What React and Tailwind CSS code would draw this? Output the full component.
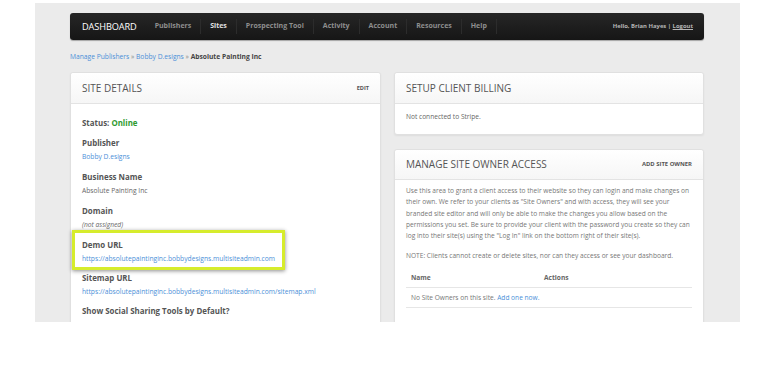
import React from "react";

const font = { fontFamily: '"Open Sans", "Noto Sans", sans-serif' };

function NavItem({ children, active }) {
  return (
    <div className="flex items-center h-full">
      <span className={`px-[9px] text-[7px] font-bold ${active ? "text-[#e0e0e0]" : "text-[#8e8e8e]"}`}>{children}</span>
      <span className="w-px h-[15px] bg-[#2c2c2c]" />
    </div>
  );
}

function Field({ label, value, cls = "text-[#4a8fd8]" }) {
  return (
    <div className="mb-[6px]">
      <div className="h-[14px] leading-[14px] text-[7.9px] font-bold text-[#555]">{label}</div>
      <div className={`h-[14px] leading-[14px] text-[6.7px] ${cls}`}>{value}</div>
    </div>
  );
}

export default function App() {
  return (
    <div className="w-[776px] h-[367px] bg-white overflow-hidden" style={font}>
      <div className="ml-[35px] mt-[3px] w-[705px] h-[319px] bg-[#ebebeb] overflow-hidden pl-[35px] pr-[36px] pt-[10px]">
        {/* Nav */}
        <div className="h-[27px] rounded-[3px] bg-gradient-to-b from-[#262626] to-[#161616] flex items-center shadow-[0_1px_1px_rgba(0,0,0,0.3)]">
          <span className="pl-[12px] pr-[9px] text-[9.2px] text-white tracking-[-0.1px]">DASHBOARD</span>
          <div className="flex items-center h-full">
            <NavItem>Publishers</NavItem>
            <NavItem active>Sites</NavItem>
            <NavItem>Prospecting Tool</NavItem>
            <NavItem>Activity</NavItem>
            <NavItem>Account</NavItem>
            <NavItem>Resources</NavItem>
            <NavItem>Help</NavItem>
          </div>
          <div className="ml-auto pr-[11px] text-[5.9px] font-bold text-[#b5b5b5]">
            Hello, Brian Hayes | <span className="underline">Logout</span>
          </div>
        </div>

        {/* Breadcrumb */}
        <div className="mt-[12px] h-[10px] leading-[10px] text-[6.7px] text-[#4a8fd8]">
          Manage Publishers <span className="text-[#888]">»</span> Bobby D.esigns <span className="text-[#888]">»</span>{" "}
          <span className="font-bold text-[#444]">Absolute Painting Inc</span>
        </div>

        <div className="mt-[10px] flex gap-[13px]">
          {/* Left card */}
          <div className="w-[311px] h-[300px] bg-white border border-[#e0e0e0] rounded-[3px] relative shadow-[0_1px_2px_rgba(0,0,0,0.06)]">
            <div className="h-[31px] flex flex-col">
              <div className="flex-1 flex items-center justify-between px-[11px] border-b border-[#e3e3e3] bg-gradient-to-b from-white to-[#f6f6f6] rounded-t-[3px]">
                <span className="text-[10px] text-[#555]">SITE DETAILS</span>
                <span className="text-[5.6px] font-bold text-[#555]">EDIT</span>
              </div>
            </div>
            <div className="px-[11px] pt-[12px]">
              <div className="mb-[6px] h-[14px] leading-[14px] text-[7.9px] font-bold text-[#555]">
                Status: <span className="text-[#2f9a2f]">Online</span>
              </div>
              <Field label="Publisher" value="Bobby D.esigns" />
              <Field label="Business Name" value="Absolute Painting Inc" cls="text-[#666]" />
              <Field label="Domain" value="(not assigned)" cls="text-[#666] italic" />
              <Field label="Demo URL" value="https://absolutepaintinginc.bobbydesigns.multisiteadmin.com" />
              <div className="-mt-[1px]">
                <Field label="Sitemap URL" value="https://absolutepaintinginc.bobbydesigns.multisiteadmin.com/sitemap.xml" />
              </div>
              <div className="-mt-[1px]">
                <Field label="Show Social Sharing Tools by Default?" value="No" cls="text-[#666]" />
              </div>
            </div>
            <div className="absolute left-[1px] top-[157px] w-[213px] h-[40px] border-[3px] border-[#d6ec2c] shadow-[0_1px_4px_rgba(0,0,0,0.45)]" />
          </div>

          {/* Right column */}
          <div className="w-[310px] flex flex-col gap-[14px]">
            <div className="h-[63px] bg-white border border-[#e0e0e0] rounded-[3px] flex flex-col shadow-[0_1px_2px_rgba(0,0,0,0.06)]">
              <div className="h-[31px] flex flex-col">
                <div className="flex-1 flex items-center px-[11px] border-b border-[#e3e3e3] bg-gradient-to-b from-white to-[#f6f6f6] rounded-t-[3px]">
                  <span className="text-[10px] text-[#555]">SETUP CLIENT BILLING</span>
                </div>
              </div>
              <div className="px-[11px] pt-[8px] text-[6.6px] leading-[10px] text-[#666]">Not connected to Stripe.</div>
            </div>

            <div className="h-[200px] bg-white border border-[#e0e0e0] rounded-[3px] shadow-[0_1px_2px_rgba(0,0,0,0.06)]">
              <div className="h-[30px] flex flex-col">
                <div className="flex-1 flex items-center justify-between px-[11px] border-b border-[#e3e3e3] bg-gradient-to-b from-white to-[#f6f6f6] rounded-t-[3px]">
                  <span className="text-[10px] text-[#555]">MANAGE SITE OWNER ACCESS</span>
                  <span className="text-[5.9px] font-bold text-[#555]">ADD SITE OWNER</span>
                </div>
              </div>
              <div className="px-[11px] pt-[5px] text-[6.6px] text-[#777]">
                <p className="leading-[11.3px]">
                  Use this area to grant a client access to their website so they can login and make changes on their own. We refer to your clients as "Site Owners" and with access, they will see your branded site editor and will only be able to make the changes you allow based on the permissions you set. Be sure to provide your client with the password you create so they can log into their site(s) using the "Log In" link on the bottom right of their site(s).
                </p>
                <p className="mt-[8.7px] leading-[11.3px]">
                  NOTE: Clients cannot create or delete sites, nor can they access or see your dashboard.
                </p>
                <div className="mt-[7px]">
                  <div className="flex h-[20px] items-center border-b border-[#e6e6e6] px-[5px] font-bold text-[#666]">
                    <span className="w-[133px]">Name</span>
                    <span>Actions</span>
                  </div>
                  <div className="flex h-[20px] items-center border-b border-[#e6e6e6] px-[5px]">
                    No Site Owners on this site.&nbsp;<span className="text-[#4a8fd8]">Add one now.</span>
                  </div>
                </div>
              </div>
            </div>
          </div>
        </div>
      </div>
    </div>
  );
}
